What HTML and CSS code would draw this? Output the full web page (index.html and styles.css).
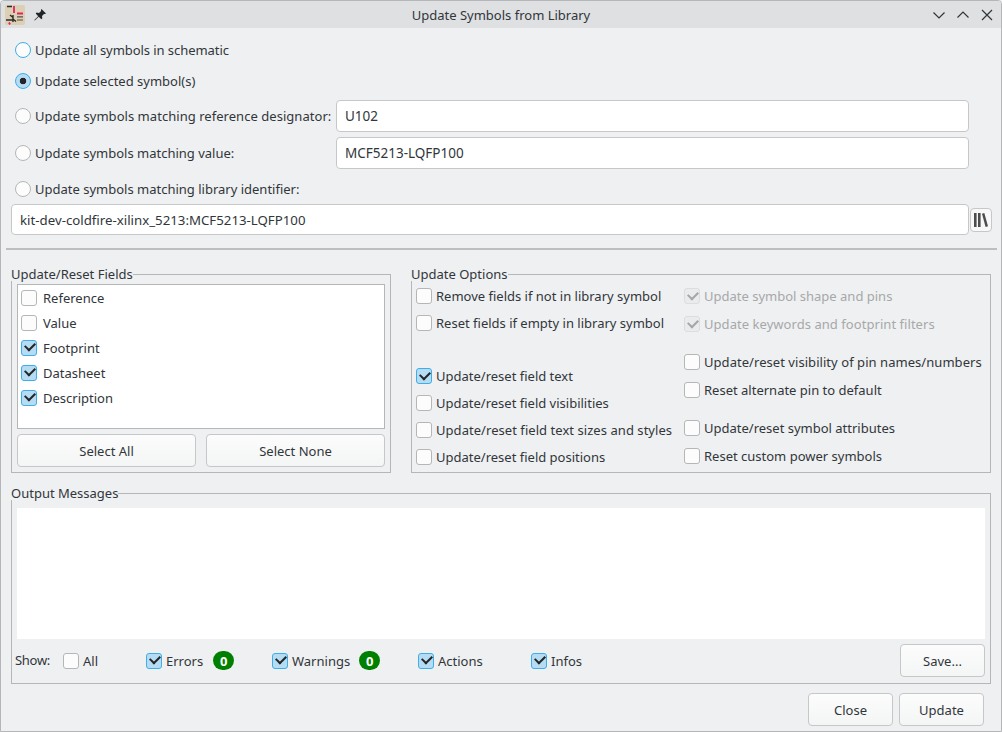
FILE: index.html
```html
<!DOCTYPE html>
<html>
<head>
    <meta charset="utf-8">
    <title>Update Symbols from Library</title>
    <link rel="stylesheet" href="styles.css">
</head>
<body>
<div class="window">
    <header class="titlebar">
        <span class="title-left">
            <svg class="app-icon" width="20" height="20" viewBox="0 0 20 20">
                <rect width="20" height="20" rx="2" fill="#dccfb4"/>
                <path d="M2 1.500h5M8 10v7M1 15h7M8 12.500l-3-2.500M8 14l3 2.500" stroke="#2b2b2b" stroke-width="1.400" fill="none"/>
                <path d="M9 1v7M12 8.500h6M4 17.500l1 2" stroke="#e0245e" stroke-width="1.800" fill="none"/>
                <path d="M12 11.800h6M12 15h6" stroke="#55504a" stroke-width="1.200" fill="none"/>
            </svg>
            <svg class="pin-icon" width="12" height="12" viewBox="0 0 12 12">
                <path d="M7.500 0 12 4.500l-1 .6-1-.2-2 2.100.3 2.300-1 1L4.700 7.700.8 11.500l-.5-.5 3.900-3.800L1.700 4.600l1-1 2.300.3 2.100-2-.2-1z" fill="#232629"/>
            </svg>
        </span>
        <span class="title-text">Update Symbols from Library</span>
        <span class="title-buttons">
            <svg width="14" height="14" viewBox="0 0 14 14"><path d="M1.500 4.500 7 10l5.500-5.500" stroke="#31363b" stroke-width="1.200" fill="none"/></svg>
            <svg width="14" height="14" viewBox="0 0 14 14"><path d="M1.500 9.500 7 4l5.500 5.500" stroke="#31363b" stroke-width="1.200" fill="none"/></svg>
            <svg width="14" height="14" viewBox="0 0 14 14"><path d="M2 2l10 10M12 2 2 12" stroke="#31363b" stroke-width="1.200" fill="none"/></svg>
        </span>
    </header>

    <main class="content">
        <div class="scope">
            <div class="scope-row row-all">
                <label class="option"><span class="radio radio-focus"></span>Update all symbols in schematic</label>
            </div>
            <div class="scope-row row-selected">
                <label class="option"><span class="radio radio-on"></span>Update selected symbol(s)</label>
            </div>
            <div class="scope-row row-ref">
                <label class="option scope-label"><span class="radio"></span>Update symbols matching reference designator:</label>
                <div class="textbox">U102</div>
            </div>
            <div class="scope-row row-value">
                <label class="option scope-label"><span class="radio"></span>Update symbols matching value:</label>
                <div class="textbox">MCF5213-LQFP100</div>
            </div>
            <div class="scope-row row-lib">
                <label class="option"><span class="radio"></span>Update symbols matching library identifier:</label>
            </div>
            <div class="lib-row">
                <div class="textbox lib-box">kit-dev-coldfire-xilinx_5213:MCF5213-LQFP100</div>
                <button class="lib-btn">
                    <svg width="14" height="14" viewBox="0 0 14 14">
                        <path d="M0 0h2.600v14H0zM4 0h2.600v14H4z" fill="#4d4d4d"/>
                        <path d="M8 .7 10.300 0 14 13.200l-2.400.8z" fill="#4d4d4d"/>
                    </svg>
                </button>
            </div>
        </div>

        <hr class="separator">

        <div class="groups">
            <section class="group fields-group">
                <div class="group-title">Update/Reset Fields</div>
                <div class="group-body fields-body">
                    <div class="field-list">
                        <label class="check-item"><span class="check"></span>Reference</label>
                        <label class="check-item"><span class="check"></span>Value</label>
                        <label class="check-item"><span class="check check-on"></span>Footprint</label>
                        <label class="check-item"><span class="check check-on"></span>Datasheet</label>
                        <label class="check-item"><span class="check check-on"></span>Description</label>
                    </div>
                    <div class="field-buttons">
                        <button class="btn">Select All</button>
                        <button class="btn">Select None</button>
                    </div>
                </div>
            </section>

            <section class="group options-group">
                <div class="group-title">Update Options</div>
                <div class="group-body options-body">
                    <div class="options-col col-left">
                        <label class="opt-item opt-a"><span class="check"></span>Remove fields if not in library symbol</label>
                        <label class="opt-item opt-b"><span class="check"></span>Reset fields if empty in library symbol</label>
                        <label class="opt-item opt-c"><span class="check check-on"></span>Update/reset field text</label>
                        <label class="opt-item opt-d"><span class="check"></span>Update/reset field visibilities</label>
                        <label class="opt-item opt-d"><span class="check"></span>Update/reset field text sizes and styles</label>
                        <label class="opt-item opt-d"><span class="check"></span>Update/reset field positions</label>
                    </div>
                    <div class="options-col col-right">
                        <label class="opt-item opt-a disabled"><span class="check check-off"></span>Update symbol shape and pins</label>
                        <label class="opt-item opt-e disabled"><span class="check check-off"></span>Update keywords and footprint filters</label>
                        <label class="opt-item opt-f"><span class="check"></span>Update/reset visibility of pin names/numbers</label>
                        <label class="opt-item opt-e"><span class="check"></span>Reset alternate pin to default</label>
                        <label class="opt-item opt-g"><span class="check"></span>Update/reset symbol attributes</label>
                        <label class="opt-item opt-e"><span class="check"></span>Reset custom power symbols</label>
                    </div>
                </div>
            </section>
        </div>

        <section class="group output-group">
            <div class="group-title">Output Messages</div>
            <div class="group-body output-body">
                <div class="messages"></div>
                <div class="show-row">
                    <span class="show-label">Show:</span>
                    <label class="show-item item-all"><span class="check"></span>All</label>
                    <label class="show-item item-errors"><span class="check check-on"></span>Errors<span class="badge">0</span></label>
                    <label class="show-item item-warnings"><span class="check check-on"></span>Warnings<span class="badge">0</span></label>
                    <label class="show-item item-actions"><span class="check check-on"></span>Actions</label>
                    <label class="show-item"><span class="check check-on"></span>Infos</label>
                    <button class="btn save-btn">Save...</button>
                </div>
            </div>
        </section>

        <footer class="dialog-buttons">
            <button class="btn dialog-btn">Close</button>
            <button class="btn dialog-btn">Update</button>
        </footer>
    </main>
</div>
</body>
</html>
```

FILE: styles.css
```css
* {
    box-sizing: border-box;
}

html, body {
    margin: 0;
    height: 100%;
}

body {
    font: 13px/18px "Noto Sans", sans-serif;
    color: #31363b;
    background: #eff0f1;
}

.window {
    height: 732px;
    display: flex;
    flex-direction: column;
    border: 1px solid #b4b6b8;
    border-top-left-radius: 4px;
    border-top-right-radius: 4px;
    overflow: hidden;
}

.titlebar {
    flex: none;
    height: 27px;
    display: flex;
    align-items: center;
    justify-content: space-between;
    padding: 0 7px 0 4px;
    background: #dee0e2;
}

.title-left {
    width: 203px;
    display: flex;
    align-items: center;
    gap: 9px;
}

.title-text {
    color: #31363b;
}

.title-buttons {
    width: 200px;
    display: flex;
    justify-content: flex-end;
    gap: 10px;
}

.content {
    flex: 1;
    padding: 0 9px 5px 10px;
    display: flex;
    flex-direction: column;
}

.scope-row {
    display: flex;
    align-items: center;
    padding-left: 4px;
}

.row-all {
    margin-top: 12px;
    height: 20px;
}

.row-selected {
    margin-top: 11px;
    height: 20px;
}

.row-ref {
    margin-top: 9px;
    height: 32px;
}

.row-value {
    margin-top: 5px;
    height: 32px;
}

.row-lib {
    margin-top: 10px;
    height: 20px;
}

.scope-label {
    width: 321px;
}

.row-ref .option {
    letter-spacing: .04px;
}

.row-all .option {
    letter-spacing: -.06px;
}

.option {
    display: flex;
    align-items: center;
    gap: 4px;
}

.radio {
    width: 16px;
    height: 16px;
    border: 1px solid #b4b6b8;
    border-radius: 50%;
    background: #fcfcfc;
    flex: none;
}

.radio-focus {
    border-color: #3daee9;
}

.radio-on {
    border-color: #3daee9;
    background: radial-gradient(circle, #232629 0 3px, #b5dcf3 3.6px);
}

.textbox {
    flex: 1;
    height: 32px;
    margin-right: 23px;
    padding: 0 8px;
    display: flex;
    align-items: center;
    font-size: 13.5px;
    background: #fff;
    border: 1px solid #c5c7c9;
    border-radius: 4px;
}

.lib-row {
    margin-top: 5px;
    display: flex;
    align-items: center;
    gap: 1px;
}

.lib-box {
    margin-right: 0;
    height: 31px;
    font-size: 13.25px;
}

.lib-btn {
    width: 22px;
    height: 24px;
    padding: 0;
    display: flex;
    align-items: center;
    justify-content: center;
    background: #f8f8f9;
    border: 1px solid #c5c7c9;
    border-radius: 4px;
}

.separator {
    margin: 13px -5px 0 -5px;
    height: 2px;
    border: 0;
    background: #bcbebf;
}

.groups {
    margin-top: 15px;
    display: flex;
    gap: 20px;
}

.group {
    display: flex;
    flex-direction: column;
}

.fields-group {
    width: 380px;
}

.options-group {
    width: 580px;
}

.group-title {
    height: 18px;
    margin-bottom: -2px;
    display: flex;
    white-space: nowrap;
}

/* the frame's top edge starts after the caption and turns down the right side */
.group-title::after {
    content: "";
    flex: 1;
    margin-top: 9px;
    border-top: 1px solid #b4b6b8;
    border-right: 1px solid #b4b6b8;
}

.group-body {
    border: 1px solid #b4b6b8;
    border-top: 0;
}

.fields-body {
    padding: 3px 5px 5px;
}

.field-list {
    height: 145px;
    background: #fff;
    border: 1px solid #b4b6b8;
}

.check-item {
    height: 25px;
    padding-left: 3px;
    display: flex;
    align-items: center;
    gap: 6px;
}

.check {
    position: relative;
    width: 16px;
    height: 16px;
    flex: none;
    border: 1px solid #b4b6b8;
    border-radius: 3px;
    background: #fcfcfc;
}

.check-on {
    border-color: #3daee9;
    background: #b5dcf3;
}

.check-on::after, .check-off::after {
    content: "";
    position: absolute;
    left: 3px;
    top: 1.500px;
    width: 8px;
    height: 5px;
    border: solid #232629;
    border-width: 0 0 2px 2px;
    transform: rotate(-45deg);
}

.check-off {
    background: #eaebec;
    border-color: #dcdddf;
}

.check-off::after {
    border-color: #a4a6a8;
}

.field-buttons {
    margin-top: 5px;
    display: flex;
    gap: 10px;
}

.btn {
    flex: 1;
    height: 33px;
    padding: 0;
    font: inherit;
    color: inherit;
    background: linear-gradient(#fcfcfc, #f4f5f5);
    border: 1px solid #c5c7c9;
    border-radius: 4px;
}

.options-body {
    flex: 1;
    display: flex;
    padding: 6px 4px 0;
}

.options-col {
    display: flex;
    flex-direction: column;
}

.col-left {
    width: 268px;
}

.opt-item {
    height: 18px;
    display: flex;
    align-items: center;
    gap: 4px;
    white-space: nowrap;
}

.opt-b {
    margin-top: 9px;
}

.opt-c {
    margin-top: 35px;
}

.opt-d {
    margin-top: 9px;
}

.opt-e {
    margin-top: 10px;
}

.opt-f {
    margin-top: 20px;
}

.opt-g {
    margin-top: 20px;
}

.col-left .opt-d:nth-child(5), .col-right .opt-e:nth-child(2), .col-right .opt-f {
    letter-spacing: .05px;
}

.disabled {
    color: #a6a8aa;
}

.output-group {
    margin-top: 11px;
    width: 980px;
}

.output-body {
    padding: 8px 5px 6px;
}

.messages {
    height: 131px;
    background: #fff;
}

.show-row {
    margin-top: 5px;
    height: 33px;
    display: flex;
    align-items: center;
}

.show-label {
    width: 48px;
    margin: -1px 0 0 -2px;
    letter-spacing: -.3px;
}

.show-item {
    display: flex;
    align-items: center;
    gap: 4px;
}

.item-all {
    width: 83px;
}

.item-errors {
    width: 126px;
}

.item-warnings {
    width: 146px;
}

.item-actions {
    width: 113px;
}

.badge {
    margin-left: 6px;
    width: 21px;
    height: 19px;
    display: flex;
    align-items: center;
    justify-content: center;
    border-radius: 10px;
    background: #008000;
    color: #fff;
    font-weight: 700;
}

.item-warnings .badge {
    margin-left: 5px;
}

.save-btn {
    flex: none;
    width: 85px;
    margin-left: auto;
}

.dialog-buttons {
    margin-top: 9px;
    padding-right: 8px;
    display: flex;
    justify-content: flex-end;
    gap: 6px;
}

.dialog-btn {
    flex: none;
    width: 85px;
}
```
